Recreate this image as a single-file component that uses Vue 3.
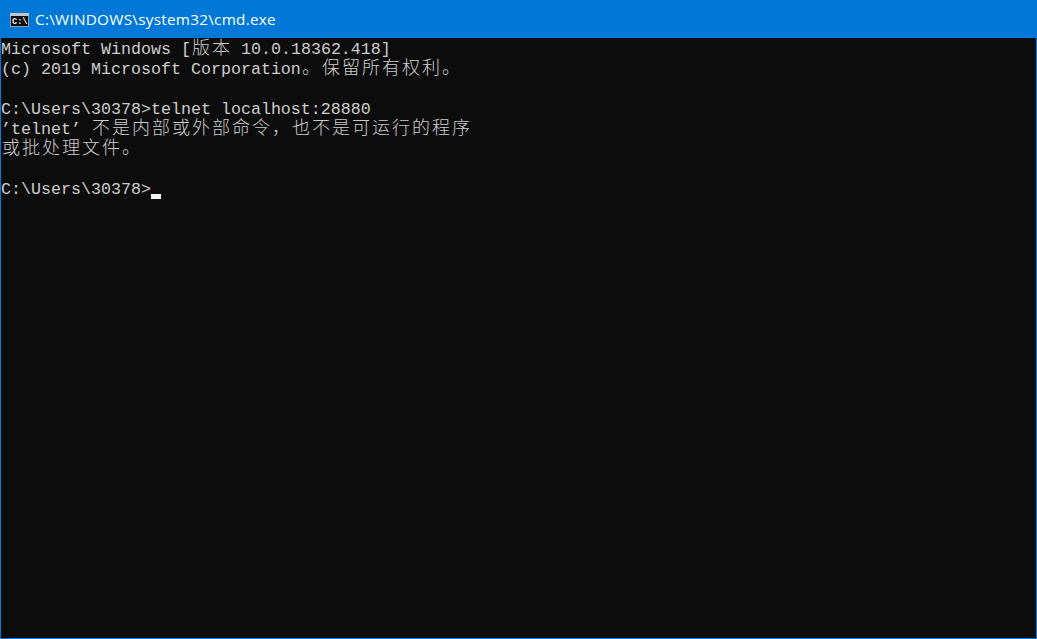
<script setup>
const lines = [
  'Microsoft Windows [版本 10.0.18362.418]',
  '(c) 2019 Microsoft Corporation。保留所有权利。',
  '',
  'C:\\Users\\30378>telnet localhost:28880',
  '’telnet’ 不是内部或外部命令，也不是可运行的程序',
  '或批处理文件。',
  '',
  'C:\\Users\\30378>'
]
const split = (line) =>
  (line.match(/[\u3000-\u9fff\uff00-\uffef]|[^\u3000-\u9fff\uff00-\uffef]+/g) || []).map((text) => ({
    text,
    cjk: /[\u3000-\u9fff\uff00-\uffef]/.test(text)
  }))
const rows = lines.map(split)
</script>

<template>
  <div class="window">
    <header class="titlebar">
      <svg class="icon" width="19" height="14" viewBox="0 0 19 14" aria-hidden="true">
        <rect x="0" y="0" width="19" height="14" fill="#9a9ea3" />
        <rect x="0" y="0" width="19" height="3" fill="#c4c6c9" />
        <rect x="1" y="3" width="17" height="10" fill="#0c0c0c" />
        <text x="2" y="11" class="icon-text">C:\</text>
        <rect x="16" y="10" width="1" height="1" fill="#f0f0f0" />
      </svg>
      <span class="title">C:\WINDOWS\system32\cmd.exe</span>
    </header>
    <main class="console">
      <div v-for="(row, i) in rows" :key="i" class="line">
        <span
          v-for="(seg, j) in row"
          :key="j"
          :class="seg.cjk ? 'cjk' : 'latin'"
        >{{ seg.text }}</span>
        <span v-if="i === rows.length - 1" class="cursor"></span>
      </div>
    </main>
  </div>
</template>

<style>
html, body { margin: 0; background: #0c0c0c; overflow: hidden; }
</style>

<style scoped>
.window {
  width: 1037px;
  height: 639px;
  box-sizing: border-box;
  border: 1px solid #0078d7;
  border-top: 0;
  display: flex;
  flex-direction: column;
  background: #0c0c0c;
}
.titlebar {
  height: 38px;
  flex: none;
  margin: 0 -1px;
  padding-left: 10px;
  display: flex;
  align-items: center;
  gap: 6px;
  background: #0078d7;
}
.icon { flex: none; margin-top: 1px; }
.icon-text {
  font: bold 8.6px "Liberation Mono", monospace;
  fill: #f0f0f0;
}
.title {
  font: 15.3px/20px "Open Sans", sans-serif;
  letter-spacing: 0.26px;
  color: #fff;
  white-space: nowrap;
}
.console {
  flex: 1;
  color: #cccccc;
  white-space: pre;
}
.line {
  height: 20px;
  line-height: 16px;
}
.line::before {
  content: "\200b";
  font-family: "Noto Sans CJK SC", sans-serif;
  font-size: 18px;
}
.latin {
  font-family: "Liberation Mono", monospace;
  font-size: 16.667px;
}
.cjk {
  display: inline-block;
  width: 20px;
  height: 16px;
  text-align: center;
  font-family: "Noto Sans CJK SC", sans-serif;
  font-size: 18px;
  font-weight: 300;
}
.cursor {
  display: inline-block;
  width: 10px;
  height: 5px;
  background: #f2f2f2;
  vertical-align: -5px;
}
</style>
